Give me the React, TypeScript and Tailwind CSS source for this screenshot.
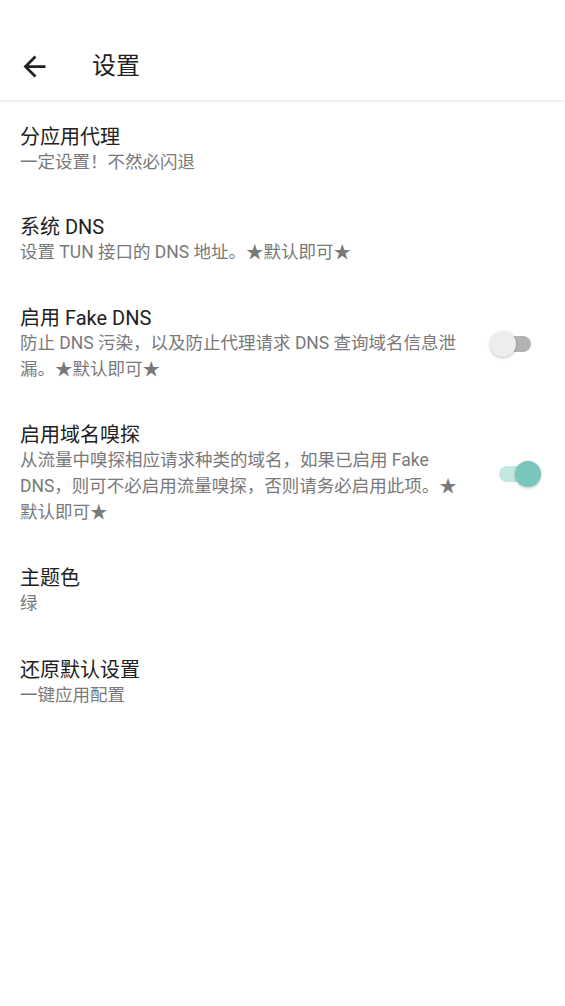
import React from "react";

type Item = {
  title: string;
  summary: string;
  toggle?: boolean;
};

const items: Item[] = [
  { title: "分应用代理", summary: "一定设置！不然必闪退" },
  { title: "系统 DNS", summary: "设置 TUN 接口的 DNS 地址。★默认即可★" },
  {
    title: "启用 Fake DNS",
    summary: "防止 DNS 污染，以及防止代理请求 DNS 查询域名信息泄漏。★默认即可★",
    toggle: false,
  },
  {
    title: "启用域名嗅探",
    summary:
      "从流量中嗅探相应请求种类的域名，如果已启用 Fake DNS，则可不必启用流量嗅探，否则请务必启用此项。★默认即可★",
    toggle: true,
  },
  { title: "主题色", summary: "绿" },
  { title: "还原默认设置", summary: "一键应用配置" },
];

function Switch({ on }: { on: boolean }) {
  return (
    <div className="relative w-[51px] h-[26px] ml-[25px] mr-[24px] shrink-0">
      <div
        className={
          on
            ? "absolute left-[9px] right-[10px] top-[5px] h-[16px] rounded-full bg-[#c5e7e2]"
            : "absolute left-[9px] right-[10px] top-[5px] h-[16px] rounded-full bg-[#b3b3b3]"
        }
      />
      <div
        className={
          on
            ? "absolute right-0 top-0 w-[26px] h-[26px] rounded-full bg-[#78c6bc] shadow-[0_1px_3px_rgba(0,0,0,0.25)]"
            : "absolute left-0 top-0 w-[26px] h-[26px] rounded-full bg-[#ededed] shadow-[0_1px_3px_rgba(0,0,0,0.25)]"
        }
      />
    </div>
  );
}

export default function App() {
  return (
    <div
      className="w-[565px] min-h-[1006px] bg-white text-[#212121]"
      style={{ fontFamily: 'Roboto, "Noto Sans CJK SC", sans-serif' }}
    >
      {/* 顶部栏 */}
      <div className="relative z-10 h-[100px] pt-[32px] bg-white shadow-[0_1px_3px_rgba(0,0,0,0.12)]">
        <div className="h-[68px] flex items-center">
          <svg
            viewBox="0 0 24 24"
            className="w-[33px] h-[33px] ml-[18px] fill-[#212121]"
          >
            <path d="M20 11H7.83l5.59-5.59L12 4l-8 8 8 8 1.41-1.41L7.83 13H20v-2z" />
          </svg>
          <div className="ml-[41px] text-[24px] leading-[32px]">设置</div>
        </div>
      </div>

      <div className="pt-px">
        {items.map((item, i) => (
          <div
            key={item.title}
            className={
              i === 0
                ? "flex items-center pl-5 pt-[23px] pb-[18px]"
                : "flex items-center pl-5 py-5"
            }
          >
            <div className="flex-1 min-w-0">
              <div className="text-[20px] leading-[26px] text-[#212121]">
                {item.title}
              </div>
              <div className="text-[17.5px] leading-[25.6px] text-[#797979]">
                {item.summary}
              </div>
            </div>
            {item.toggle !== undefined && <Switch on={item.toggle} />}
          </div>
        ))}
      </div>
    </div>
  );
}
